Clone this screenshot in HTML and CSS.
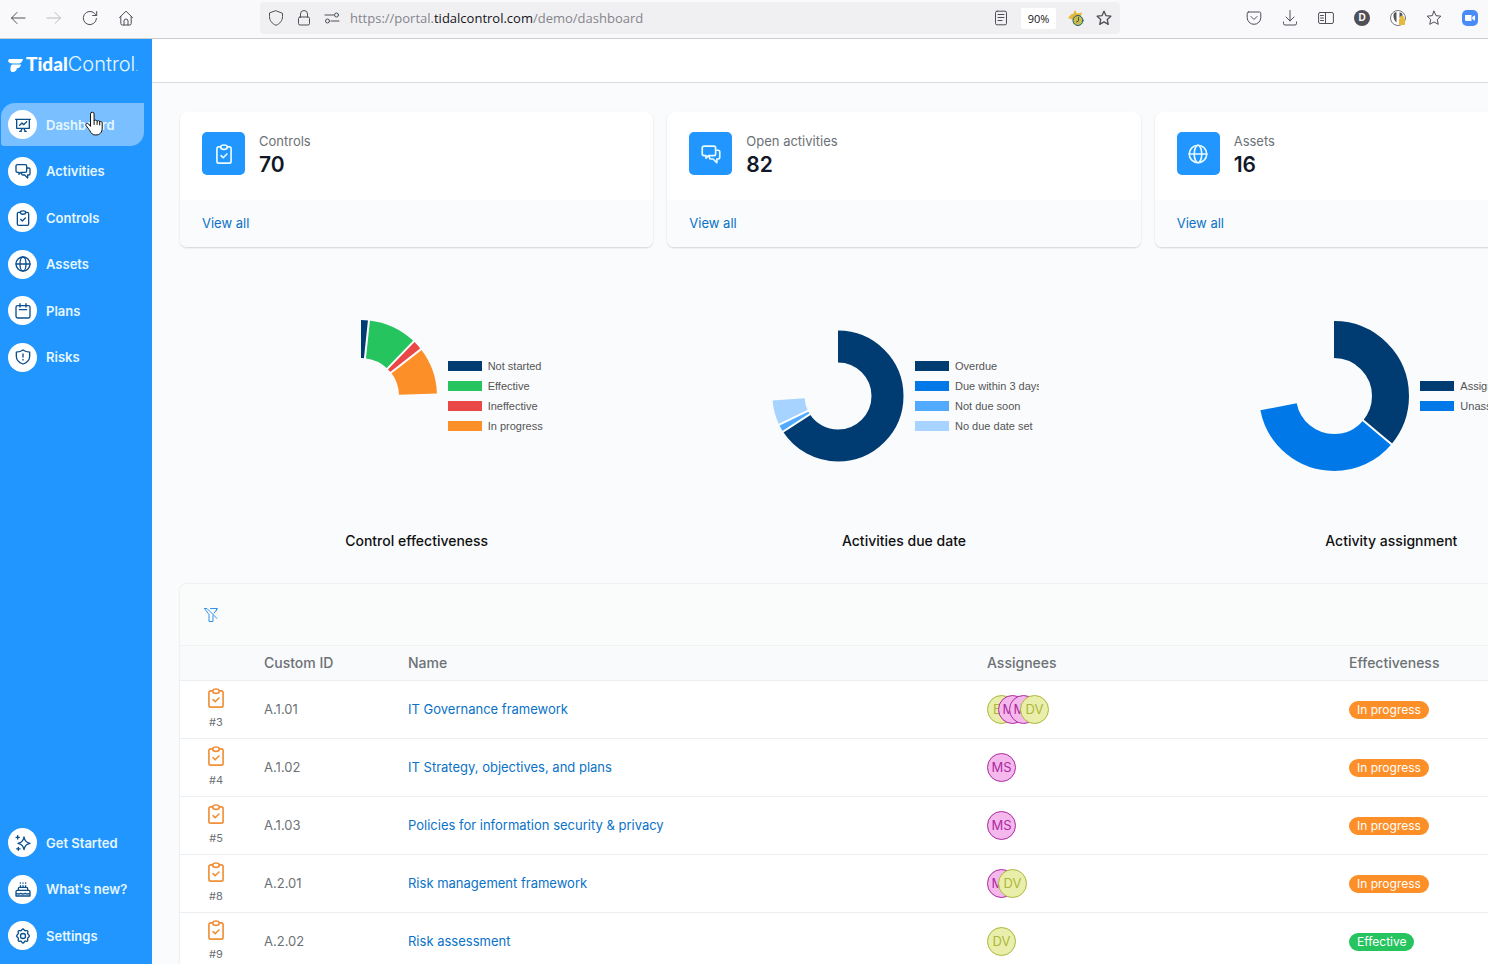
FILE: index.html
```html
<!DOCTYPE html>
<html lang="en">
<head>
    <meta charset="UTF-8">
    <meta name="viewport" content="width=device-width, initial-scale=1.0">
    <title>Dashboard - Tidal Control</title>
    <link rel="stylesheet" href="styles.css">
</head>
<body>

<!-- Shared icons -->
<svg class="sprite" aria-hidden="true">
    <symbol id="i-board" viewBox="0 0 24 24"><path d="M1 3.500h22M2.500 3.500v13.500h19V3.500M7 12.500l3.500-3.500 2.500 2.500L17.500 7M8.500 21.500l2-4M15.500 21.500l-2-4M7 21.500h2.500M14.500 21.500H17"/></symbol>
    <symbol id="i-chat" viewBox="0 0 24 24"><path d="M3.500 2.500h12a2 2 0 0 1 2 2v7.500a2 2 0 0 1-2 2H9l-3 3v-3H3.500a2 2 0 0 1-2-2V4.500a2 2 0 0 1 2-2zM18 7.500h2.500a2 2 0 0 1 2 2V16a2 2 0 0 1-2 2H19v4.500L14.500 18H12a2 2 0 0 1-2-2v-1.500"/></symbol>
    <symbol id="i-clip" viewBox="0 0 24 24"><path d="M8 3.500H5.500a2 2 0 0 0-2 2V21a2 2 0 0 0 2 2h13a2 2 0 0 0 2-2V5.500a2 2 0 0 0-2-2H16M8.500 14l2.500 2.500 4.500-4.500"/><ellipse cx="12" cy="3.800" rx="4" ry="2.600"/></symbol>
    <symbol id="i-globe" viewBox="0 0 24 24"><circle cx="12" cy="12" r="10.500"/><ellipse cx="12" cy="12" rx="4.500" ry="10.500"/><path d="M1.500 12h21"/></symbol>
    <symbol id="i-cal" viewBox="0 0 24 24"><rect x="1.500" y="4" width="21" height="18.500" rx="2.500"/><path d="M7.500 1v5M16.500 1v5M6.500 10h11"/></symbol>
    <symbol id="i-shield" viewBox="0 0 24 24"><path d="M12 1.500c3 2.200 6 3 10 3.200v6c0 5.500-4 9.500-10 11.800-6-2.300-10-6.300-10-11.800v-6C6 4.500 9 3.700 12 1.500zM12 7.500v4.500M12 15.800v.7"/></symbol>
    <symbol id="i-spark" viewBox="0 0 24 24"><path d="M13.500 3c1 6 3.500 8.500 9 9.500-5.500 1-8 3.500-9 9.500-1-6-3.500-8.500-9-9.500 5.500-1 8-3.500 9-9.500zM4 1v5M1.500 3.500h5M5 18.500v4.500M2.500 20.800h5"/></symbol>
    <symbol id="i-cake" viewBox="0 0 24 24"><path d="M1.500 22.500h21V16a2 2 0 0 0-2-2h-17a2 2 0 0 0-2 2zM5 14v-2.500a2 2 0 0 1 2-2h10a2 2 0 0 1 2 2V14M8 9.500V7M12 9.500V7M16 9.500V7M8 2.800v.4M12 2.800v.4M16 2.800v.4M2 18.500c3 1.600 4 1.600 6.600 0 2.700 1.600 4 1.600 6.700 0 2.700 1.600 3.700 1.600 6.700 0"/></symbol>
    <symbol id="i-cog" viewBox="0 0 24 24"><path d="M12 1.500c1.500 0 1.800 2 3 2.500s3-.8 4 .3-.5 2.700 0 4 2.500 1.700 2.500 3.700-2 2.200-2.500 3.500.9 3-.2 4.100-2.600-.3-3.800.2-1.500 2.700-3 2.700-1.800-2.200-3-2.700-2.700.9-3.800-.2.300-2.800-.2-4.100S2.500 13.500 2.500 12s2-2.400 2.500-3.700-1-2.900 0-4 2.800.2 4-.3 1.500-2.500 3-2.500z"/><circle cx="12" cy="12" r="3.800"/></symbol>
    <symbol id="i-star" viewBox="0 0 24 24"><path d="M12 1.800l3 6.700 7.300.8-5.400 5 1.500 7.200L12 17.900l-6.400 3.600 1.500-7.200-5.400-5 7.300-.8z"/></symbol>
</svg>

<!-- Browser toolbar -->
<div class="toolbar">
    <button class="tool" aria-label="Back"><svg viewBox="0 0 16 16"><path d="M15 8H1.500M7 2.500L1.500 8 7 13.500"/></svg></button>
    <button class="tool off" aria-label="Forward"><svg viewBox="0 0 16 16"><path d="M1 8h13.500M9 2.500L14.500 8 9 13.500"/></svg></button>
    <button class="tool" aria-label="Reload"><svg viewBox="0 0 16 16"><path d="M14.500 8.500A6.600 6.600 0 1 1 12.500 3.300L14.500 5.300M14.700 1.500v4h-4"/></svg></button>
    <button class="tool" aria-label="Home"><svg viewBox="0 0 16 16"><path d="M1.500 7.500L8 1.200l6.500 6.300M2.800 6.500v7a1.500 1.500 0 0 0 1.500 1.500h7.400a1.500 1.500 0 0 0 1.500-1.500v-7M6 15v-4a2 2 0 0 1 4 0v4"/></svg></button>

    <div class="urlbar">
        <button class="mini" aria-label="Tracking protection"><svg viewBox="0 0 16 16"><path d="M8 .8l6.500 2.500v3.200c0 4-2.500 7.200-6.500 8.800-4-1.600-6.500-4.800-6.500-8.800V3.300z"/></svg></button>
        <button class="mini" aria-label="Site security"><svg viewBox="0 0 16 16"><rect x="2.500" y="7" width="11" height="8" rx="1.500"/><path d="M4.500 7V4a3.500 3.500 0 0 1 7 0v3"/></svg></button>
        <button class="mini" aria-label="Permissions"><svg viewBox="0 0 16 16"><path d="M1 5h8.500M7 11h8"/><circle cx="12.500" cy="5" r="2"/><circle cx="3.500" cy="11" r="2"/></svg></button>
        <div class="url" role="textbox" aria-label="Address">https://portal.<b>tidalcontrol.com</b>/demo/dashboard</div>
        <button class="mini" aria-label="Reader view"><svg viewBox="0 0 16 16"><rect x="2.500" y="1.200" width="11" height="13.600" rx="1.500"/><path d="M5 4.500h6M5 7.500h6M5 10.500h4"/></svg></button>
        <button class="zoom">90%</button>
        <button class="mini" aria-label="Clock add-on"><svg viewBox="0 0 16 16"><path class="gold" d="M7 0l2 3.500 5-1-1.500 5 2 4-5 1-4 2-.5-4.500L0 8l3-3.500L5 4z"/><circle class="clock" cx="10" cy="10.500" r="5"/><path d="M10.500 7.500v3.500l-2 1"/></svg></button>
        <button class="mini" aria-label="Bookmark"><svg viewBox="0 0 24 24" class="thick"><use href="#i-star"/></svg></button>
    </div>

    <button class="tool" aria-label="Pocket"><svg viewBox="0 0 16 16"><path d="M2.500 2h11a1.300 1.300 0 0 1 1.300 1.300V7.500a6.800 6.800 0 0 1-13.600 0V3.300A1.300 1.300 0 0 1 2.500 2zM5 6.500l3 3 3-3"/></svg></button>
    <button class="tool" aria-label="Downloads"><svg viewBox="0 0 16 16"><path d="M8 .5v10.500M4 7l4 4 4-4M1.500 12v1.500A1.500 1.500 0 0 0 3 15h10a1.500 1.500 0 0 0 1.500-1.500V12"/></svg></button>
    <button class="tool" aria-label="Sidebars"><svg viewBox="0 0 16 16"><rect x=".6" y="2.500" width="14.800" height="11" rx="1.500"/><path d="M7.500 2.500v11M2.500 5.500h3M2.500 8h3M2.500 10.500h3"/></svg></button>
    <button class="tool" aria-label="Account"><span class="account">D</span></button>
    <button class="tool" aria-label="Privacy Badger"><svg viewBox="0 0 16 16"><circle class="badger" cx="8" cy="8" r="7.500"/><path class="dark" d="M3.500 4c1-1.500 2-2 3-1.500v10C4.500 11 3 8 3.500 4zM9.500 2.500c2-.5 3 1 3.200 3L9.500 8z"/><rect class="amber" x="9" y="8.500" width="6" height="6.500" rx="1"/><circle class="amber" cx="12" cy="7.500" r="2"/></svg></button>
    <button class="tool" aria-label="Bookmarks"><svg viewBox="0 0 24 24" class="thin"><use href="#i-star"/></svg></button>
    <button class="tool" aria-label="Zoom"><svg viewBox="0 0 16 16"><rect class="zoom-bg" width="16" height="16" rx="5"/><path class="white" d="M3 5h6.500v6H4.500A1.500 1.500 0 0 1 3 9.500zM10.300 7l2.700-1.800v5.600L10.300 9z"/></svg></button>
</div>

<div class="app">
    <aside class="sidebar">
        <a class="logo" href="#">
            <svg viewBox="0 0 16 14"><path d="M2.500 0H16c-.4 3-2 4.800-5 4.800H5C2 4.800 0 3.800 0 2 0 .6 1 0 2.500 0zM5.500 5.800H14c-.5 2.500-2 3.900-4.500 4.100C9.200 12.600 7.500 14 5.200 14 3.500 14 2.600 13.200 2.600 11.500c0-3.500.2-5.700 2.900-5.700z"/></svg>
            <span><b>Tidal</b>Control<small>.</small></span>
        </a>
        <nav class="menu">
            <a class="item active" href="#"><span class="dot"><svg><use href="#i-board"/></svg></span>Dashboard</a>
            <a class="item" href="#"><span class="dot"><svg><use href="#i-chat"/></svg></span>Activities</a>
            <a class="item" href="#"><span class="dot"><svg><use href="#i-clip"/></svg></span>Controls</a>
            <a class="item" href="#"><span class="dot"><svg><use href="#i-globe"/></svg></span>Assets</a>
            <a class="item" href="#"><span class="dot"><svg><use href="#i-cal"/></svg></span>Plans</a>
            <a class="item" href="#"><span class="dot"><svg><use href="#i-shield"/></svg></span>Risks</a>
        </nav>
        <nav class="menu menu-bottom">
            <a class="item" href="#"><span class="dot"><svg><use href="#i-spark"/></svg></span>Get Started</a>
            <a class="item" href="#"><span class="dot"><svg><use href="#i-cake"/></svg></span>What's new?</a>
            <a class="item" href="#"><span class="dot"><svg><use href="#i-cog"/></svg></span>Settings</a>
        </nav>
    </aside>

    <main class="main">
        <header class="topbar"></header>
        <div class="content">

            <!-- Totals -->
            <section class="columns">
                <div class="card">
                    <div class="card-body">
                        <span class="tile"><svg><use href="#i-clip"/></svg></span>
                        <div><p class="card-label">Controls</p><p class="card-value">70</p></div>
                    </div>
                    <div class="card-foot"><a href="#">View all</a></div>
                </div>
                <div class="card">
                    <div class="card-body">
                        <span class="tile"><svg><use href="#i-chat"/></svg></span>
                        <div><p class="card-label">Open activities</p><p class="card-value">82</p></div>
                    </div>
                    <div class="card-foot"><a href="#">View all</a></div>
                </div>
                <div class="card">
                    <div class="card-body">
                        <span class="tile"><svg><use href="#i-globe"/></svg></span>
                        <div><p class="card-label">Assets</p><p class="card-value">16</p></div>
                    </div>
                    <div class="card-foot"><a href="#">View all</a></div>
                </div>
            </section>

            <!-- Charts, one degree per dash unit -->
            <section class="columns charts">
                <figure>
                    <div class="chart">
                        <svg class="donut" width="152" height="152" viewBox="-76 -76 152 152">
                            <g transform="rotate(-90)" stroke-width="38">
                                <circle r="57" pathLength="360" class="s-navy" stroke-dasharray="6 354"/>
                                <circle r="57" pathLength="360" class="s-green" stroke-dasharray="38 322" stroke-dashoffset="-6"/>
                                <circle r="57" pathLength="360" class="s-red" stroke-dasharray="8 352" stroke-dashoffset="-44"/>
                                <circle r="57" pathLength="360" class="s-orange" stroke-dasharray="36 324" stroke-dashoffset="-52"/>
                            </g>
                            <path class="cut" d="M0-37v-40" transform="rotate(6)"/>
                            <path class="cut" d="M0-37v-40" transform="rotate(44)"/>
                            <path class="cut" d="M0-37v-40" transform="rotate(52)"/>
                        </svg>
                        <ul class="legend">
                            <li><i class="b-navy"></i>Not started</li>
                            <li><i class="b-green"></i>Effective</li>
                            <li><i class="b-red"></i>Ineffective</li>
                            <li><i class="b-orange"></i>In progress</li>
                        </ul>
                    </div>
                    <figcaption>Control effectiveness</figcaption>
                </figure>
                <figure>
                    <div class="chart">
                        <svg class="donut" width="132" height="132" viewBox="-66 -66 132 132">
                            <g transform="rotate(-90)" stroke-width="32">
                                <circle r="49.500" pathLength="360" class="s-navy" stroke-dasharray="237 123"/>
                                <circle r="49.500" pathLength="360" class="s-sky" stroke-dasharray="7 353" stroke-dashoffset="-237"/>
                                <circle r="49.500" pathLength="360" class="s-pale" stroke-dasharray="22 338" stroke-dashoffset="-244"/>
                            </g>
                            <path class="cut" d="M0-32v-35" transform="rotate(237)"/>
                            <path class="cut" d="M0-32v-35" transform="rotate(244)"/>
                        </svg>
                        <ul class="legend">
                            <li><i class="b-navy"></i>Overdue</li>
                            <li><i class="b-blue"></i>Due within 3 days</li>
                            <li><i class="b-sky"></i>Not due soon</li>
                            <li><i class="b-pale"></i>No due date set</li>
                        </ul>
                    </div>
                    <figcaption>Activities due date</figcaption>
                </figure>
                <figure>
                    <div class="chart">
                        <svg class="donut" width="150" height="150" viewBox="-75 -75 150 150">
                            <g transform="rotate(-90)" stroke-width="37">
                                <circle r="56.500" pathLength="360" class="s-navy" stroke-dasharray="130 230"/>
                                <circle r="56.500" pathLength="360" class="s-blue" stroke-dasharray="129 231" stroke-dashoffset="-130"/>
                            </g>
                            <path class="cut" d="M0-37v-40" transform="rotate(130)"/>
                        </svg>
                        <ul class="legend">
                            <li><i class="b-navy"></i>Assigned</li>
                            <li><i class="b-blue"></i>Unassigned</li>
                        </ul>
                    </div>
                    <figcaption>Activity assignment</figcaption>
                </figure>
            </section>

            <!-- Controls table -->
            <section class="panel">
                <div class="panel-bar">
                    <button class="filter" aria-label="Clear filters"><svg viewBox="0 0 16 16"><path d="M1.500 1.500H4l10 10M7.500 1.500h7L11 6.200M1.500 1.500l4.500 6V14.500h4V8.500M13.500 1.500v2"/></svg></button>
                </div>
                <table>
                    <colgroup><col class="c-icon"><col class="c-id"><col class="c-name"><col class="c-people"><col></colgroup>
                    <thead>
                        <tr><th></th><th>Custom ID</th><th>Name</th><th>Assignees</th><th>Effectiveness</th></tr>
                    </thead>
                    <tbody>
                        <tr>
                            <td class="ref"><svg><use href="#i-clip"/></svg><span>#3</span></td>
                            <td>A.1.01</td>
                            <td><a href="#">IT Governance framework</a></td>
                            <td><div class="people"><span class="av lime">EV</span><span class="av pink">MS</span><span class="av pink">MS</span><span class="av lime">DV</span></div></td>
                            <td><span class="badge">In progress</span></td>
                        </tr>
                        <tr>
                            <td class="ref"><svg><use href="#i-clip"/></svg><span>#4</span></td>
                            <td>A.1.02</td>
                            <td><a href="#">IT Strategy, objectives, and plans</a></td>
                            <td><div class="people"><span class="av pink">MS</span></div></td>
                            <td><span class="badge">In progress</span></td>
                        </tr>
                        <tr>
                            <td class="ref"><svg><use href="#i-clip"/></svg><span>#5</span></td>
                            <td>A.1.03</td>
                            <td><a href="#">Policies for information security &amp; privacy</a></td>
                            <td><div class="people"><span class="av pink">MS</span></div></td>
                            <td><span class="badge">In progress</span></td>
                        </tr>
                        <tr>
                            <td class="ref"><svg><use href="#i-clip"/></svg><span>#8</span></td>
                            <td>A.2.01</td>
                            <td><a href="#">Risk management framework</a></td>
                            <td><div class="people"><span class="av pink">MS</span><span class="av lime">DV</span></div></td>
                            <td><span class="badge">In progress</span></td>
                        </tr>
                        <tr>
                            <td class="ref"><svg><use href="#i-clip"/></svg><span>#9</span></td>
                            <td>A.2.02</td>
                            <td><a href="#">Risk assessment</a></td>
                            <td><div class="people"><span class="av lime">DV</span></div></td>
                            <td><span class="badge done">Effective</span></td>
                        </tr>
                    </tbody>
                </table>
            </section>
        </div>
    </main>
</div>

<!-- Pointer over the menu -->
<svg class="pointer" viewBox="0 0 18 25" aria-hidden="true"><path d="M5.500 15V3a1.800 1.800 0 0 1 3.600 0v7c.5-1.300 2.800-1.200 3 .3.700-1 2.500-.8 2.600.6.800-.8 2.500-.4 2.500 1V17c0 4.500-2.500 7-6.500 7-3 0-4.500-1.500-6-4.500L1 14.500c-.8-1.600 1-2.800 2.300-1.700z"/><path d="M9.100 10v3.500M12.100 10.500v3M14.700 11v3"/></svg>

</body>
</html>
```
FILE: styles.css
```css
* {
    box-sizing: border-box;
}
body {
    margin: 0;
    height: 100vh;
    display: flex;
    flex-direction: column;
    overflow: hidden;
    font-family: Inter, sans-serif;
    font-size: 13px;
    line-height: 20px;
    color: #6c7176;
    background: #f9fbfd;
}
a {
    color: #0a72c7;
    text-decoration: none;
}
p, figure, ul {
    margin: 0;
    padding: 0;
}
button {
    border: none;
    padding: 0;
    background: none;
    cursor: pointer;
}
svg {
    fill: none;
    stroke: currentColor;
    stroke-width: 2;
    stroke-linecap: round;
    stroke-linejoin: round;
}
.sprite {
    display: none;
}

/* Browser toolbar */
.toolbar {
    flex: none;
    display: flex;
    align-items: center;
    height: 39px;
    padding-bottom: 2px;
    background: #f9f9fb;
    border-bottom: 1px solid #cccccf;
}
.tool, .mini {
    flex: none;
    display: flex;
    align-items: center;
    justify-content: center;
    width: 36px;
    height: 32px;
    color: #4f4f58;
}
.mini {
    width: 28px;
}
.tool svg, .mini svg {
    width: 16px;
    height: 16px;
    stroke-width: 1;
}
.mini svg.thick {
    stroke-width: 2;
}
.tool svg.thin {
    stroke-width: 1.5;
}
.off {
    color: #bcbcc2;
}
.urlbar {
    flex: 1;
    display: flex;
    align-items: center;
    height: 32px;
    margin: 0 116px;
    padding: 0 2px;
    border-radius: 4px;
    background: #f0f0f2;
}
.url {
    flex: 1;
    padding-left: 4px;
    font-family: "Open Sans", "Noto Sans", sans-serif;
    color: #85858c;
    white-space: nowrap;
}
.url b {
    font-weight: 400;
    color: #15141a;
}
.zoom {
    width: 35px;
    height: 21px;
    margin: 0 6px;
    border-radius: 2px;
    background: #fff;
    font-family: "Open Sans", "Noto Sans", sans-serif;
    font-size: 11px;
    color: #15141a;
}
.account {
    width: 16px;
    height: 16px;
    border-radius: 50%;
    background: #4f4f58;
    color: #fff;
    font: bold 10px/16px "Liberation Sans", sans-serif;
}
.gold, .amber {
    fill: #e5b93c;
    stroke: none;
}
.clock {
    fill: #c7c04a;
    stroke: #1d5a75;
}
.badger {
    fill: #fff;
    stroke: #777;
}
.dark {
    fill: #55555c;
    stroke: none;
}
.zoom-bg {
    fill: #4a8cf7;
    stroke: none;
}
.white {
    fill: #fff;
    stroke: none;
}

/* Sidebar */
.app {
    flex: 1;
    display: flex;
    min-height: 0;
}
.sidebar {
    flex: none;
    display: flex;
    flex-direction: column;
    width: 152px;
    padding: 14px 8px 7px 1px;
    background: #2196ff;
}
.logo {
    display: flex;
    align-items: center;
    gap: 3px;
    height: 24px;
    margin-bottom: 26px;
    padding-left: 7px;
    font-size: 20px;
    font-weight: 300;
    white-space: nowrap;
    color: #e6f7ff;
}
.logo svg {
    width: 15px;
    height: 13px;
    fill: #fff;
    stroke: none;
}
.logo b {
    font-family: Lato, sans-serif;
    font-size: 19px;
    font-weight: 900;
    color: #fff;
}
.logo small {
    font-size: 11px;
    opacity: 0.6;
}
.menu {
    display: flex;
    flex-direction: column;
    justify-content: space-between;
    height: 276px;
}
.menu-bottom {
    height: 136px;
    margin-top: auto;
}
.item {
    display: flex;
    align-items: center;
    gap: 9px;
    height: 43px;
    padding-left: 7px;
    border-radius: 14px 0 14px 3px;
    font-weight: 600;
    color: #e6f7ff;
}
.item.active {
    background: #7abfff;
}
.dot {
    display: flex;
    align-items: center;
    justify-content: center;
    width: 29px;
    height: 29px;
    border-radius: 50%;
    background: #fff;
    color: #0b4f8c;
}
.dot svg {
    width: 16px;
    height: 16px;
}

/* Main area */
.main {
    flex: 1;
    min-width: 0;
    overflow: hidden;
}
.topbar {
    height: 44px;
    background: #fff;
    border-bottom: 1px solid #d9dce1;
}
.content {
    min-width: 1504px;
    padding: 29px 28px;
}
.columns {
    display: grid;
    grid-template-columns: repeat(3, 1fr);
    gap: 14px;
}
.card {
    border-radius: 7px;
    background: #fff;
    box-shadow: 0 1px 2px rgba(0, 0, 0, 0.16);
    overflow: hidden;
}
.card-body {
    display: flex;
    gap: 14px;
    height: 88px;
    padding: 20px 22px;
}
.tile {
    display: flex;
    align-items: center;
    justify-content: center;
    width: 43px;
    height: 43px;
    border-radius: 5px;
    background: #2196ff;
    color: #e8fbff;
}
.tile svg {
    width: 20px;
    height: 20px;
}
.card-label {
    line-height: 18px;
}
.card-value {
    font-size: 21px;
    line-height: 29px;
    font-weight: 600;
    color: #111827;
}
.card-foot {
    padding: 13px 22px 14px;
    background: #f9fbfc;
}

/* Charts */
.charts {
    margin-top: 13px;
}
.charts figure {
    display: flex;
    flex-direction: column;
    align-items: center;
}
.chart {
    display: flex;
    align-items: center;
    gap: 11px;
    width: 270px;
    height: 271px;
    padding-left: 3px;
    overflow: hidden;
}
.donut {
    flex: none;
    stroke-linecap: butt;
}
.legend {
    list-style: none;
    font-family: "Liberation Sans", sans-serif;
    font-size: 11px;
    color: #555;
}
.legend li {
    display: flex;
    align-items: center;
    gap: 6px;
    white-space: nowrap;
}
.legend i {
    width: 34px;
    height: 10px;
}
.cut { stroke: #fff; }
.s-navy { stroke: #003c71; }
.s-blue { stroke: #0078e8; }
.s-sky { stroke: #52aaff; }
.s-pale { stroke: #a6d3ff; }
.s-green { stroke: #26c45f; }
.s-red { stroke: #ea4747; }
.s-orange { stroke: #fd8f28; }
.b-navy { background: #003c71; }
.b-blue { background: #0078e8; }
.b-sky { background: #52aaff; }
.b-pale { background: #a6d3ff; }
.b-green { background: #26c45f; }
.b-red { background: #ea4747; }
.b-orange { background: #fd8f28; }
figcaption {
    font-size: 14px;
    font-weight: 500;
    color: #111;
}

/* Table */
.panel {
    margin-top: 33px;
    border-radius: 7px;
    background: #fff;
    box-shadow: 0 0 2px rgba(0, 0, 0, 0.16);
    overflow: hidden;
}
.panel-bar {
    display: flex;
    align-items: center;
    height: 62px;
    padding: 0 23px;
    background: #fafbfb;
    border-bottom: 1px solid #f0f2f3;
}
.filter {
    color: #3592ea;
}
.filter svg {
    display: block;
    width: 16px;
    height: 16px;
    stroke-width: 1;
}
table {
    width: 100%;
    table-layout: fixed;
    border-collapse: collapse;
}
.c-icon { width: 72px; }
.c-id { width: 144px; }
.c-name { width: 579px; }
.c-people { width: 362px; }
th, td {
    padding: 0 12px;
    text-align: left;
    border-bottom: 1px solid #eceff1;
}
th {
    height: 34px;
    background: #f9fafb;
    font-size: 14px;
    font-weight: 500;
}
td {
    height: 58px;
}
.ref {
    text-align: center;
    font-size: 11px;
}
.ref svg {
    display: block;
    width: 20px;
    height: 20px;
    margin: 0 auto 5px;
    color: #f0913a;
}
.ref span {
    display: block;
    line-height: 18px;
}
.people {
    display: flex;
}
.av {
    width: 29px;
    height: 29px;
    border: 1px solid;
    border-radius: 50%;
    line-height: 27px;
    text-align: center;
}
.av + .av {
    margin-left: -18px;
}
.lime {
    background: #e9efaa;
    color: #adb63c;
}
.pink {
    background: #f5b8ec;
    color: #ab2ba0;
}
.badge {
    display: inline-block;
    padding: 0 8px;
    border-radius: 9px;
    background: #fd8f28;
    color: #fff;
    font-size: 12px;
    line-height: 18px;
}
.done {
    background: #26c45f;
}

/* Mouse pointer */
.pointer {
    position: absolute;
    left: 85px;
    top: 111px;
    width: 18px;
    height: 25px;
    fill: #fff;
    stroke: #111;
    stroke-width: 1;
}
```
